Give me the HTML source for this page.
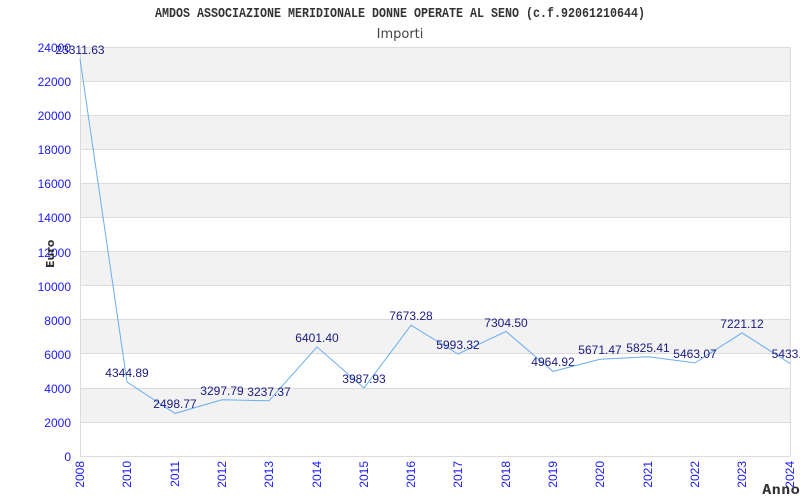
<!DOCTYPE html>
<html><head><meta charset="utf-8"><style>
html,body{margin:0;padding:0;background:#fff;width:800px;height:500px;overflow:hidden}
svg{display:block}
.ax{font-family:"Liberation Sans",Arial,sans-serif;font-size:12px;fill:#1a1aff}
.dl{font-family:"Liberation Sans",Arial,sans-serif;font-size:12px;fill:#1a1a80;text-anchor:middle}
</style></head><body>
<svg width="800" height="500" xmlns="http://www.w3.org/2000/svg">
<text x="155" y="17" textLength="490" lengthAdjust="spacingAndGlyphs" font-family="Liberation Mono,monospace" font-weight="bold" font-size="13.5" fill="#333">AMDOS ASSOCIAZIONE MERIDIONALE DONNE OPERATE AL SENO (c.f.92061210644)</text>
<text x="400" y="38" text-anchor="middle" font-family="DejaVu Sans,sans-serif" font-size="13" fill="#444">Importi</text>
<g fill="#f2f2f2">
<rect x="80" y="47" width="710" height="34.1"/>
<rect x="80" y="115.2" width="710" height="34.1"/>
<rect x="80" y="183.3" width="710" height="34.1"/>
<rect x="80" y="251.5" width="710" height="34.1"/>
<rect x="80" y="319.7" width="710" height="34.1"/>
<rect x="80" y="387.8" width="710" height="34.1"/>
</g>
<g stroke="#dcdcdc" stroke-width="1">
<line x1="80" x2="790" y1="47.5" y2="47.5"/><line x1="80" x2="790" y1="81.5" y2="81.5"/>
<line x1="80" x2="790" y1="115.5" y2="115.5"/><line x1="80" x2="790" y1="149.5" y2="149.5"/>
<line x1="80" x2="790" y1="183.5" y2="183.5"/><line x1="80" x2="790" y1="217.5" y2="217.5"/>
<line x1="80" x2="790" y1="251.5" y2="251.5"/><line x1="80" x2="790" y1="285.5" y2="285.5"/>
<line x1="80" x2="790" y1="319.5" y2="319.5"/><line x1="80" x2="790" y1="353.5" y2="353.5"/>
<line x1="80" x2="790" y1="388.5" y2="388.5"/><line x1="80" x2="790" y1="422.5" y2="422.5"/>
<line x1="80" x2="790" y1="456.5" y2="456.5"/>
<line x1="80.5" x2="80.5" y1="47" y2="456"/><line x1="790.5" x2="790.5" y1="47" y2="456"/>
</g>
<g class="ax" text-anchor="end">
<text x="71" y="52">24000</text><text x="71" y="86">22000</text><text x="71" y="120">20000</text>
<text x="71" y="154">18000</text><text x="71" y="188">16000</text><text x="71" y="222">14000</text>
<text x="71" y="257">12000</text><text x="71" y="291">10000</text><text x="71" y="325">8000</text>
<text x="71" y="359">6000</text><text x="71" y="393">4000</text><text x="71" y="427">2000</text>
<text x="71" y="461">0</text>
</g>
<g class="ax" text-anchor="end">
<text transform="translate(84,461) rotate(-90)">2008</text>
<text transform="translate(131,461) rotate(-90)">2010</text>
<text transform="translate(179,461) rotate(-90)">2011</text>
<text transform="translate(226,461) rotate(-90)">2012</text>
<text transform="translate(273,461) rotate(-90)">2013</text>
<text transform="translate(321,461) rotate(-90)">2014</text>
<text transform="translate(368,461) rotate(-90)">2015</text>
<text transform="translate(415,461) rotate(-90)">2016</text>
<text transform="translate(462,461) rotate(-90)">2017</text>
<text transform="translate(510,461) rotate(-90)">2018</text>
<text transform="translate(557,461) rotate(-90)">2019</text>
<text transform="translate(604,461) rotate(-90)">2020</text>
<text transform="translate(652,461) rotate(-90)">2021</text>
<text transform="translate(699,461) rotate(-90)">2022</text>
<text transform="translate(746,461) rotate(-90)">2023</text>
<text transform="translate(794,461) rotate(-90)">2024</text>
</g>
<text transform="translate(54,268) rotate(-90)" font-family="DejaVu Sans,sans-serif" font-size="11" font-weight="bold" fill="#333">Euro</text>
<text x="762" y="494" textLength="38" lengthAdjust="spacingAndGlyphs" font-family="DejaVu Sans Mono,monospace" font-size="13" font-weight="bold" fill="#333">Anno</text>
<polyline fill="none" stroke="#6aaef0" stroke-width="1" points="80,58.7 127,382 175,413.4 222,399.8 269,400.8 317,346.9 364,388 411,325.2 458,353.9 506,331.5 553,371.4 600,359.3 648,356.7 695,362.9 742,332.9 790,363.4"/>
<g class="dl">
<text x="80" y="54">23311.63</text>
<text x="127" y="377">4344.89</text>
<text x="175" y="408">2498.77</text>
<text x="222" y="395">3297.79</text>
<text x="269" y="396">3237.37</text>
<text x="317" y="342">6401.40</text>
<text x="364" y="383">3987.93</text>
<text x="411" y="320">7673.28</text>
<text x="458" y="349">5993.32</text>
<text x="506" y="327">7304.50</text>
<text x="553" y="366">4964.92</text>
<text x="600" y="354">5671.47</text>
<text x="648" y="352">5825.41</text>
<text x="695" y="358">5463.07</text>
<text x="742" y="328">7221.12</text>
<text x="790" y="358">5433.5</text>
</g>
</svg>
</body></html>
